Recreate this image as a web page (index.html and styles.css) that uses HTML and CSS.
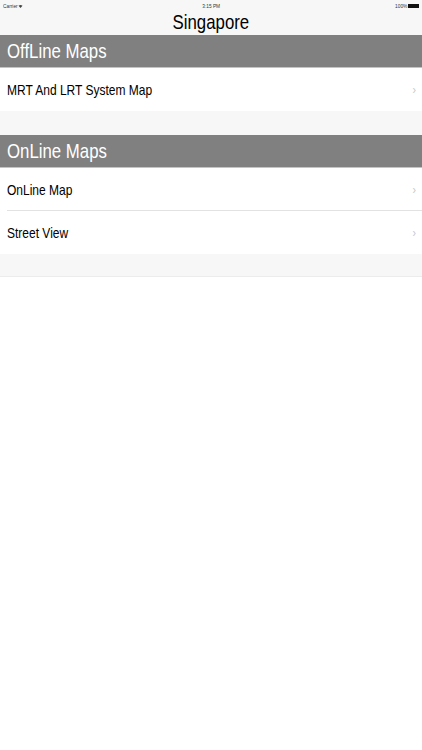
FILE: index.html
```html
<!DOCTYPE html>
<html>
<head>
<meta charset="utf-8">
<link rel="stylesheet" href="styles.css">
</head>
<body>
<div class="top">
  <div class="status">
    <span class="st-left"><span class="sq">Carrier</span>
      <svg class="wifi" width="5" height="4" viewBox="0 0 10 8"><path d="M5 8 L1 3.5 Q5 0 9 3.5 Z" fill="#444"/></svg>
    </span>
    <span class="st-mid sq">3:15 PM</span>
    <span class="st-right"><span class="sq">100%</span><span class="batt"></span></span>
  </div>
  <div class="title"><span class="sq">Singapore</span></div>
</div>
<div class="section-head"><span class="sq">OffLine Maps</span></div>
<div class="row"><span class="sq">MRT And LRT System Map</span><span class="chev">›</span></div>
<div class="gap"></div>
<div class="section-head"><span class="sq">OnLine Maps</span></div>
<div class="row sep"><span class="sq">OnLine Map</span><span class="chev">›</span></div>
<div class="row"><span class="sq">Street View</span><span class="chev">›</span></div>
<div class="gap last"></div>
</body>
</html>
```
FILE: styles.css
```css
html, body { margin: 0; padding: 0; background: #fff; }
body { font-family: "Liberation Sans", Arial, sans-serif; color: #000; width: 422px; }
.sq { display: inline-block; transform: scaleX(0.8); transform-origin: left center; white-space: nowrap; }
.top { background: #f7f7f7; height: 35px; }
.status { height: 11px; display: flex; justify-content: space-between; align-items: center; font-size: 6px; padding: 0 3px; color: #333; }
.st-left { display: flex; align-items: center; width: 60px; }
.st-left .sq { margin-right: -3px; }
.st-mid { transform-origin: center; }
.st-right { display: flex; align-items: center; justify-content: flex-end; width: 60px; }
.st-right .sq { transform-origin: right center; }
.batt { width: 10px; height: 4px; background: #111; margin-left: 1px; border-right: 1px solid #111; }
.title { text-align: center; font-size: 21px; line-height: 21px; }
.title .sq { transform-origin: center; }
.section-head { background: #808080; color: #fff; font-size: 21px; height: 32px; line-height: 32px; padding-left: 7px; border-bottom: 1px solid #c4c4c4; }
.row { background: #fff; height: 43px; display: flex; align-items: center; justify-content: space-between; padding-left: 7px; padding-right: 6px; font-size: 15px; position: relative; }
.row.sep::after { content: ""; position: absolute; left: 7px; right: 0; bottom: 0; height: 1px; background: #e2e2e2; }
.chev { color: #c7c7cc; font-size: 13px; transform: scaleX(0.8); }
.gap { background: #f7f7f7; height: 24px; }
.gap.last { border-bottom: 1px solid #ececec; height: 22px; }
```
